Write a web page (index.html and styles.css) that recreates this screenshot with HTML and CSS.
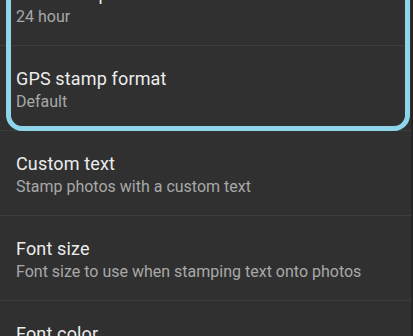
FILE: index.html
```html
<!DOCTYPE html>
<html lang="en">
<head>
    <meta charset="UTF-8">
    <meta name="viewport" content="width=device-width, initial-scale=1.0">
    <title>Stamp settings</title>
    <link rel="stylesheet" href="styles.css">
</head>
<body>
    <div class="settings">
        <div class="item">
            <div class="title">Timestamp format</div>
            <div class="summary">24 hour</div>
        </div>
        <div class="item">
            <div class="title">GPS stamp format</div>
            <div class="summary">Default</div>
        </div>
        <div class="item">
            <div class="title">Custom text</div>
            <div class="summary">Stamp photos with a custom text</div>
        </div>
        <div class="item">
            <div class="title">Font size</div>
            <div class="summary">Font size to use when stamping text onto photos</div>
        </div>
        <div class="item">
            <div class="title">Font color</div>
            <div class="summary">Color to use when stamping text onto photos</div>
        </div>

        <!-- Destaque em volta dos formatos -->
        <div class="highlight"></div>
    </div>
</body>
</html>
```

FILE: styles.css
```css
* {
    margin: 0;
    padding: 0;
    box-sizing: border-box;
}

body {
    font-family: Roboto, "Noto Sans", sans-serif;
    background-color: #262626;
    height: 100vh;
    overflow: hidden;
}

.settings {
    position: relative;
    background-color: #303030;
    margin-top: -39px;
    margin-right: 2px;
}

.item {
    padding: 21px 16px 18px 16px;
    border-bottom: 1px solid #3d3d3d;
}

.title {
    font-size: 18px;
    line-height: 24px;
    letter-spacing: 0.15px;
    color: #ececec;
}

.summary {
    font-size: 16px;
    line-height: 20px;
    margin-top: 1px;
    color: #a8a8a8;
}

/* Contorno azul sobre os dois primeiros itens */
.highlight {
    position: absolute;
    top: -61px;
    left: 6px;
    width: 404px;
    height: 231px;
    border: 5px solid #8fd5ea;
    border-radius: 16px;
}
```
